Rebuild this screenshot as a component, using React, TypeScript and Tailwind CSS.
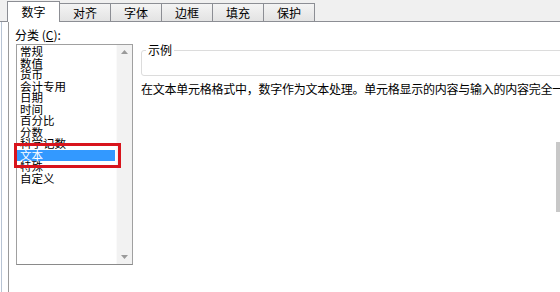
import React from "react";

const items = ["常规", "数值", "货币", "会计专用", "日期", "时间", "百分比", "分数", "科学记数", "文本", "特殊", "自定义"];
const tabs = ["数字", "对齐", "字体", "边框", "填充", "保护"];

export default function App() {
  return (
    <div
      className="relative w-[560px] h-[292px] bg-white overflow-hidden flex flex-col text-black"
      style={{ fontFamily: '"Noto Sans CJK SC", "Noto Sans", sans-serif' }}
    >
      {/* tab strip */}
      <div className="h-[22px] bg-[#f0f0f0] flex items-end shrink-0">
        <div className="w-[7px] shrink-0 h-[1px] bg-[#8c8e94] self-end" />
        {tabs.map((t, i) =>
          i === 0 ? (
            <div
              key={t}
              className="w-[53px] shrink-0 h-[21px] bg-white border-t border-l border-r border-[#8c8e94] flex items-center justify-center text-[12px] leading-[12px] pb-[1px]"
            >
              {t}
            </div>
          ) : (
            <div
              key={t}
              className="w-[51px] shrink-0 h-[19px] bg-gradient-to-b from-[#f4f4f4] to-[#e3e3e3] border-t border-r border-b border-[#8c8e94] flex items-center justify-center text-[12px] leading-[12px]"
            >
              {t}
            </div>
          )
        )}
        <div className="flex-1 h-[1px] bg-[#8c8e94]" />
      </div>

      {/* body */}
      <div className="flex-1 flex min-w-0">
        <div className="w-[1px] shrink-0 ml-[1px] bg-[#b8c4d4]" />
        <div className="w-[6px] shrink-0" />
        <div className="w-[1px] shrink-0 bg-[#9a9a9a]" />
        <div className="flex shrink-0 pl-[6px]">
          {/* left column */}
          <div className="flex flex-col shrink-0">
            <div className="mt-[7px] text-[12px] leading-[12px] h-[12px] whitespace-nowrap">
              分类 (<span className="underline">C</span>):
            </div>
            <div className="relative mt-[3px] ml-[1px] w-[117px] h-[221px] border border-[#a0a0a0] border-b-[#8a8a8a] flex">
              <div className="w-[99px] shrink-0 pt-[1px] flex flex-col">
                {items.map((it) =>
                  it === "文本" ? (
                    <div
                      key={it}
                      className="h-[11.55px] w-[98px] bg-[#3399ff] text-white text-[11.5px] leading-[11.55px] pl-[3px] whitespace-nowrap"
                    >
                      {it}
                    </div>
                  ) : (
                    <div
                      key={it}
                      className="h-[11.55px] text-[11.5px] leading-[11.55px] pl-[3px] whitespace-nowrap"
                    >
                      {it}
                    </div>
                  )
                )}
              </div>
              {/* scrollbar */}
              <div className="w-[16px] shrink-0 bg-[#f2f2f2] border-l border-[#fafafa] flex flex-col items-center justify-between py-[5px]">
                <svg width="7" height="4" viewBox="0 0 7 4">
                  <path d="M0 4 L3.5 0 L7 4 Z" fill="#9a9a9a" />
                </svg>
                <svg width="7" height="4" viewBox="0 0 7 4">
                  <path d="M0 0 L3.5 4 L7 0 Z" fill="#9a9a9a" />
                </svg>
              </div>
              {/* red highlight box */}
              <div className="absolute left-[-3px] top-[98px] w-[107px] h-[25px] border-[3px] border-[#d8141c]" />
            </div>
          </div>

          {/* right column */}
          <div className="ml-[8px] flex flex-col shrink-0">
            <div className="relative mt-[28px] w-[460px] h-[26px] border border-[#dcdcdc] rounded-[3px]">
              <div className="absolute left-[4px] top-[-7px] bg-white px-[2px] text-[12px] leading-[12px]">示例</div>
            </div>
            <div className="mt-[7px] text-[12px] leading-[12px] whitespace-nowrap tracking-[-0.25px]">
              在文本单元格格式中，数字作为文本处理。单元格显示的内容与输入的内容完全一致。
            </div>
          </div>
        </div>
      </div>

      {/* right edge thumb */}
      <div className="absolute right-0 top-[142px] w-[4px] h-[70px] bg-[#c8c8c8]" />
    </div>
  );
}
